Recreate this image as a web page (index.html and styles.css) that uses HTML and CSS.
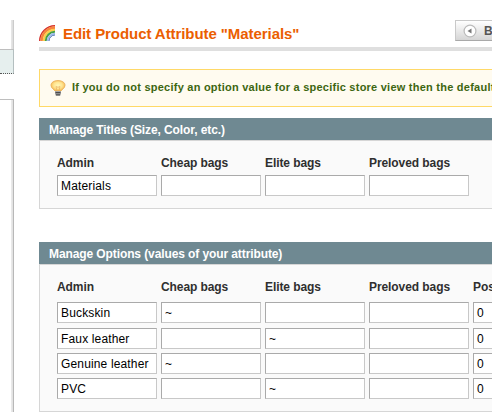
FILE: index.html
```html
<!DOCTYPE html>
<html lang="en">
<head>
<meta charset="utf-8">
<title>Edit Product Attribute</title>
<link rel="stylesheet" href="styles.css">
</head>
<body>
<div class="page">
  <aside class="sidebar">
    <div class="tab"></div>
    <div class="tab active"></div>
    <div class="gap"></div>
    <div class="side-panel"></div>
  </aside>
  <main class="content">
    <header class="content-header">
      <svg class="rainbow" width="16" height="16" viewBox="0 0 16 16" fill="none">
        <circle cx="16" cy="16" r="15.300" stroke="#d3302c" stroke-width="1.400"/>
        <circle cx="16" cy="16" r="13.400" stroke="#f7843f" stroke-width="2.600"/>
        <circle cx="16" cy="16" r="11.200" stroke="#fbd04c" stroke-width="2.200"/>
        <circle cx="16" cy="16" r="9.200" stroke="#46a043" stroke-width="2"/>
        <circle cx="16" cy="16" r="7.400" stroke="#9dbbea" stroke-width="1.800"/>
        <circle cx="16" cy="16" r="6" stroke="#4a6fb4" stroke-width="1"/>
      </svg>
      <h1>Edit Product Attribute "Materials"</h1>
      <button class="back" type="button">
        <svg width="14" height="14" viewBox="0 0 14 14"><circle cx="7" cy="7" r="5.900" fill="#fff" stroke="#bbb" stroke-width="1.200"/><path d="M4.500 7L8.500 4.500V9.500Z" fill="#777"/></svg>
        <span>Back</span>
      </button>
    </header>
    <div class="notice">
      <svg width="16" height="16" viewBox="0 0 16 16">
        <defs><radialGradient id="glow" cx=".5" cy=".45" r=".55"><stop offset="0" stop-color="#fff7b8"/><stop offset=".55" stop-color="#ffe590"/><stop offset="1" stop-color="#f5b650"/></radialGradient></defs>
        <path d="M5 11C4.500 9.500 1 8.500 1 5.200C1 2.300 4.300 .6 8 .6S15 2.300 15 5.200C15 8.500 11.500 9.500 11 11Z" fill="url(#glow)" stroke="#e9b15c" stroke-width=".9"/>
        <path d="M6 6.500L7 10.500M10 6.500L9 10.500M6 6.500L8 7.300L10 6.500" stroke="#e5a860" stroke-width=".6" fill="none"/>
        <path d="M5 11H11V13.500L10 15.500H6L5 13.500Z" fill="#a5a5a5"/>
        <path d="M5.500 12.700H10.500M5.800 14.800H10.200" stroke="#4c4c4c" stroke-width="1.200"/>
      </svg>
      <span>If you do not specify an option value for a specific store view then the default</span>
    </div>
    <section class="titles">
      <h2>Manage Titles (Size, Color, etc.)</h2>
      <div class="fieldset">
        <div class="grid labels"><span>Admin</span><span>Cheap bags</span><span>Elite bags</span><span>Preloved bags</span></div>
        <div class="grid row"><div class="field">Materials</div><div class="field"></div><div class="field"></div><div class="field"></div></div>
      </div>
    </section>
    <section class="options">
      <h2>Manage Options (values of your attribute)</h2>
      <div class="fieldset">
        <div class="grid labels"><span>Admin</span><span>Cheap bags</span><span>Elite bags</span><span>Preloved bags</span><span>Position</span></div>
        <div class="grid row first"><div class="field">Buckskin</div><div class="field">~</div><div class="field"></div><div class="field"></div><div class="field">0</div></div>
        <div class="grid row"><div class="field">Faux leather</div><div class="field"></div><div class="field">~</div><div class="field"></div><div class="field">0</div></div>
        <div class="grid row"><div class="field">Genuine leather</div><div class="field">~</div><div class="field"></div><div class="field"></div><div class="field">0</div></div>
        <div class="grid row"><div class="field">PVC</div><div class="field"></div><div class="field">~</div><div class="field"></div><div class="field">0</div></div>
      </div>
    </section>
  </main>
</div>
</body>
</html>
```
FILE: styles.css
```css
* { box-sizing: border-box; }
body { margin: 0; background: #fff; overflow: hidden; font: 12px/16px "Liberation Sans", Arial, sans-serif; color: #2f2f2f; }
.page { display: flex; width: 492px; height: 412px; overflow: hidden; }
.sidebar { width: 14px; flex: none; padding-top: 20px; display: flex; flex-direction: column; }
.tab { height: 29px; background: linear-gradient(to right, #fff 11px, #e8e8e8 11px, #dcdcdc 13px, #ccc 13px); }
.tab.active { height: 25px; background: #e6efee; border-top: 1px solid #bebebe; border-right: 1px solid #b4bfc0; border-bottom: 1px dotted #555; }
.gap { height: 25px; }
.side-panel { flex: 1; border-top: 1px solid #bebebe; background: linear-gradient(to right, #fff 11px, #ececec 11px, #e0e0e0 13px, #b8b8b8 13px); }
.content { width: 453px; flex: none; margin-left: 25px; overflow: hidden; white-space: nowrap; }
.content-header { display: flex; height: 51px; padding-top: 20px; border-bottom: 4px solid #dfdfdf; }
.rainbow { margin-top: 5px; flex: none; overflow: hidden; }
h1 { margin: 4px 0 0 8px; font-size: 15px; line-height: 20px; color: #eb5e00; width: 392px; flex: none; letter-spacing: -.07px; }
.back { display: flex; flex: none; align-items: center; width: 80px; height: 21px; padding: 0 7px; gap: 7px; border: 1px solid #c9c9c9; border-bottom-color: #a9a9a9; background: linear-gradient(#fff, #d5d5d5); font: bold 12px "Liberation Sans", Arial, sans-serif; color: #555; }
.back svg { flex: none; }
.notice { display: flex; align-items: center; height: 38px; margin-top: 18px; padding-left: 10px; border: 1px solid #ffd967; border-right: 0; background: #fffbf0; color: #3d6611; font-size: 11px; font-weight: bold; letter-spacing: .24px; }
.notice svg { flex: none; margin-right: 6px; }
.notice span { position: relative; top: -1px; }
h2 { margin: 0; height: 22px; padding: 1px 10px 0; background: #6f8992; color: #fff; font-size: 12px; line-height: 22px; letter-spacing: -.1px; }
.titles { margin-top: 11px; }
.options { margin-top: 33px; }
.fieldset { border: 1px solid #d6d6d6; border-right: 0; background: #fafafa; padding: 13px 0 0 17px; height: 69px; }
.options .fieldset { height: 148px; }
.grid { display: grid; grid-template-columns: repeat(5, 100px); column-gap: 4px; }
.labels { height: 21px; line-height: 18px; font-weight: bold; letter-spacing: -.08px; }
.options .labels { height: 24px; }
.row { margin-bottom: 4px; }
.row.first { margin-bottom: 5px; }
.field { height: 21px; padding: 0 3px; border: 1px solid; border-color: #aaa #c8c8c8 #c8c8c8 #aaa; background: #fff; color: #000; line-height: 20px; letter-spacing: .15px; }
```
